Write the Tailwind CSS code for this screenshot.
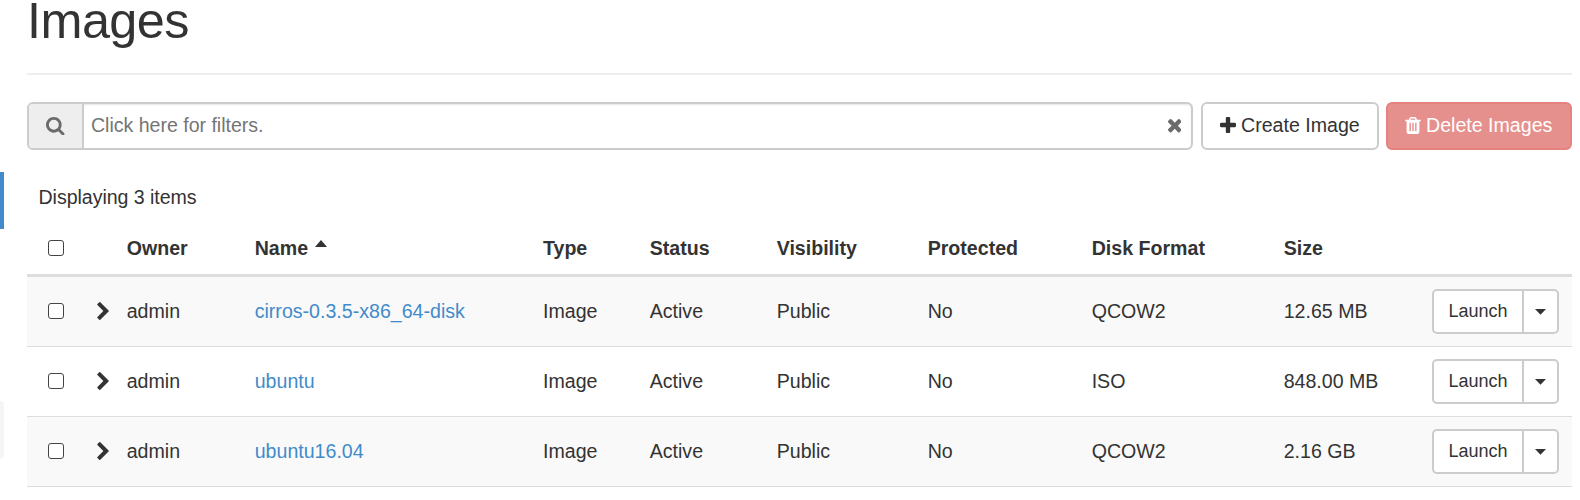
<!DOCTYPE html>
<html lang="en">
<head>
<meta charset="utf-8">
<title>Images</title>
<script src="https://cdn.jsdelivr.net/npm/@tailwindcss/browser@4"></script>
</head>
<body class="bg-white text-[#333] font-['Liberation_Sans',Arial,sans-serif] text-[19.6px] leading-[28px] overflow-hidden">
<svg class="hidden">
  <symbol id="chevron" viewBox="346 26 1036 1612"><path d="M1363 877l-742 742q-19 19-45 19t-45-19l-166-166q-19-19-19-45t19-45l531-531-531-531q-19-19-19-45t19-45l166-166q19-19 45-19t45 19l742 742q19 19 19 45t-19 45z"/></symbol>
  <symbol id="caret-down" viewBox="0 0 11 6"><path d="M0 0h11L5.500 5.700z"/></symbol>
</svg>
<div class="flex h-[500px]">
  <aside class="w-1 shrink-0 pt-[172px]">
    <div class="h-[57px] bg-[#428bca]"></div>
    <div class="mt-[172px] h-[58px] rounded-r-[4px] bg-[#f5f5f5]"></div>
  </aside>
  <main class="ml-[23px] w-[1545px] shrink-0">
    <header class="h-[75px] border-b-2 border-[#eee]">
      <h1 class="text-[50.4px] leading-[42px] font-normal tracking-[-0.55px]">Images</h1>
    </header>
    <div class="mt-[27px] flex h-12">
      <div class="flex w-[1166px] items-center rounded-[6px] border-2 border-[#ccc] shadow-[inset_0_1px_2px_rgba(0,0,0,0.1)]">
        <div class="flex h-full w-[55px] items-center justify-center rounded-l-[4px] border-r-2 border-[#ccc] bg-[#eee]">
          <svg class="size-[18.500px] fill-[#6b6b6b]" viewBox="0 128 1664 1664"><path d="M1152 832q0-185-131.500-316.500t-316.500-131.500-316.500 131.500-131.500 316.500 131.500 316.500 316.500 131.500 316.500-131.500 131.500-316.500zm512 832q0 52-38 90t-90 38q-54 0-90-38l-343-342q-179 124-399 124-143 0-273.500-55.500t-225-150-150-225-55.500-273.500 55.500-273.500 150-225 225-150 273.500-55.500 273.500 55.500 225 150 150 225 55.500 273.500q0 220-124 399l343 343q37 37 37 90z"/></svg>
        </div>
        <span class="grow pl-[7px] pb-[2px] text-[#757575] tracking-[-0.03px]">Click here for filters.</span>
        <svg class="mr-[10px] size-[13.500px] fill-[#6b6b6b]" viewBox="302 366 1188 1188"><path d="M1490 1322q0 40-28 68l-136 136q-28 28-68 28t-68-28l-294-294-294 294q-28 28-68 28t-68-28l-136-136q-28-28-28-68t28-68l294-294-294-294q-28-28-28-68t28-68l136-136q28-28 68-28t68 28l294 294 294-294q28-28 68-28t68 28l136 136q28 28 28 68t-28 68l-294 294 294 294q28 28 28 68z"/></svg>
      </div>
      <button class="ml-2 flex w-[178px] items-center rounded-[6px] border-2 border-[#ccc] bg-white pl-[17px] pb-[2px]">
        <svg class="mr-[5px] size-4 shrink-0 fill-[#333]" viewBox="192 128 1408 1408"><path d="M1600 736v192q0 40-28 68t-68 28h-416v416q0 40-28 68t-68 28h-192q-40 0-68-28t-28-68v-416h-416q-40 0-68-28t-28-68v-192q0-40 28-68t68-28h416v-416q0-40 28-68t68-28h192q40 0 68 28t28 68v416h416q40 0 68 28t28 68z"/></svg>
        <span class="whitespace-nowrap">Create Image</span>
      </button>
      <button class="ml-[7px] flex w-[186px] items-center rounded-[6px] border-2 border-[#e3827f] bg-[#e6908d] pl-[17px] pb-[2px] text-white">
        <svg class="mr-[5px] h-[17px] w-4 shrink-0 fill-white" viewBox="192 128 1408 1536"><path d="M704 1376v-704q0-14-9-23t-23-9h-64q-14 0-23 9t-9 23v704q0 14 9 23t23 9h64q14 0 23-9t9-23zm256 0v-704q0-14-9-23t-23-9h-64q-14 0-23 9t-9 23v704q0 14 9 23t23 9h64q14 0 23-9t9-23zm256 0v-704q0-14-9-23t-23-9h-64q-14 0-23 9t-9 23v704q0 14 9 23t23 9h64q14 0 23-9t9-23zm-544-992h448l-48-117q-7-9-17-11h-317q-10 2-17 11zm928 32v64q0 14-9 23t-23 9h-96v948q0 83-47 143.500t-113 60.500h-832q-66 0-113-58.500t-47-141.500v-952h-96q-14 0-23-9t-9-23v-64q0-14 9-23t23-9h309l70-167q15-37 54-63t79-26h320q40 0 79 26t54 63l70 167h309q14 0 23 9t9 23z"/></svg>
        <span class="whitespace-nowrap">Delete Images</span>
      </button>
    </div>
    <p class="mt-[33px] pl-[11.500px] tracking-[-0.05px]">Displaying 3 items</p>
    <div class="mt-[11px]">
      <div class="grid h-[55px] grid-cols-[70px_29.7px_128px_288.3px_106.7px_127px_151px_164px_192px_1fr] items-center border-b-3 border-[#ddd] pb-[1px] font-bold">
        <input type="checkbox" class="ml-[20.500px] size-4 appearance-none rounded-[3px] border-[1.500px] border-[#444] bg-white"><span></span>
        <span>Owner</span>
        <span class="flex">Name<svg class="mt-[6px] ml-[7px] h-[7px] w-3 fill-[#333]" viewBox="0 0 12 7"><path d="M0 7h12L6 0z"/></svg></span>
        <span>Type</span><span>Status</span><span>Visibility</span><span>Protected</span><span>Disk Format</span><span>Size</span>
      </div>

      <div class="grid h-[70px] grid-cols-[70px_29.7px_128px_288.3px_106.7px_127px_151px_164px_192px_148.3px_1fr] items-center border-b border-[#ddd] bg-[#f9f9f9] *:[span]:pb-[2px] *:[a]:pb-[2px] *:[input]:mb-[2px]">
        <input type="checkbox" class="ml-[20.500px] size-4 appearance-none rounded-[3px] border-[1.500px] border-[#444] bg-white">
        <svg class="mb-[2px] h-[18px] w-3 fill-[#333]"><use href="#chevron"/></svg>
        <span>admin</span><a class="text-[#428bca]">cirros-0.3.5-x86_64-disk</a><span>Image</span><span>Active</span><span>Public</span><span>No</span><span>QCOW2</span><span>12.65 MB</span>
        <div class="flex h-[45px] w-[127px] rounded-[5px] border-2 border-[#ccc] bg-white text-[18px]">
          <button class="w-[90px] border-r-2 border-[#ccc] pb-[1px]">Launch</button>
          <button class="flex grow items-center justify-center"><svg class="h-[6px] w-[11px] fill-[#333]"><use href="#caret-down"/></svg></button>
        </div>
      </div>

      <div class="grid h-[70px] grid-cols-[70px_29.7px_128px_288.3px_106.7px_127px_151px_164px_192px_148.3px_1fr] items-center border-b border-[#ddd] *:[span]:pb-[2px] *:[a]:pb-[2px] *:[input]:mb-[2px]">
        <input type="checkbox" class="ml-[20.500px] size-4 appearance-none rounded-[3px] border-[1.500px] border-[#444] bg-white">
        <svg class="mb-[2px] h-[18px] w-3 fill-[#333]"><use href="#chevron"/></svg>
        <span>admin</span><a class="text-[#428bca]">ubuntu</a><span>Image</span><span>Active</span><span>Public</span><span>No</span><span>ISO</span><span>848.00 MB</span>
        <div class="flex h-[45px] w-[127px] rounded-[5px] border-2 border-[#ccc] bg-white text-[18px]">
          <button class="w-[90px] border-r-2 border-[#ccc] pb-[1px]">Launch</button>
          <button class="flex grow items-center justify-center"><svg class="h-[6px] w-[11px] fill-[#333]"><use href="#caret-down"/></svg></button>
        </div>
      </div>

      <div class="grid h-[70px] grid-cols-[70px_29.7px_128px_288.3px_106.7px_127px_151px_164px_192px_148.3px_1fr] items-center border-b border-[#ddd] bg-[#f9f9f9] *:[span]:pb-[2px] *:[a]:pb-[2px] *:[input]:mb-[2px]">
        <input type="checkbox" class="ml-[20.500px] size-4 appearance-none rounded-[3px] border-[1.500px] border-[#444] bg-white">
        <svg class="mb-[2px] h-[18px] w-3 fill-[#333]"><use href="#chevron"/></svg>
        <span>admin</span><a class="text-[#428bca]">ubuntu16.04</a><span>Image</span><span>Active</span><span>Public</span><span>No</span><span>QCOW2</span><span>2.16 GB</span>
        <div class="flex h-[45px] w-[127px] rounded-[5px] border-2 border-[#ccc] bg-white text-[18px]">
          <button class="w-[90px] border-r-2 border-[#ccc] pb-[1px]">Launch</button>
          <button class="flex grow items-center justify-center"><svg class="h-[6px] w-[11px] fill-[#333]"><use href="#caret-down"/></svg></button>
        </div>
      </div>
    </div>
  </main>
</div>
</body>
</html>
